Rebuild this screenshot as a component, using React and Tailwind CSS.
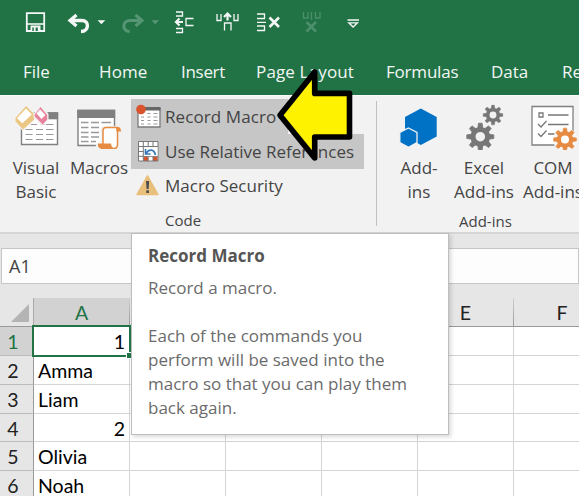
import React from "react";

const tabs = [
  ["File", "w-[76px]"],
  ["Home", "w-[82px] tracking-[0.1px]"],
  ["Insert", "w-[75px] tracking-[-0.3px]"],
  ["Page Layout", "w-[130px] tracking-[0.15px]"],
  ["Formulas", "w-[105px] tracking-[-0.2px]"],
  ["Data", "w-[71px]"],
  ["Re", "w-[17px]"],
];

const rows = [
  { n: 1, a: "1", num: true, h: "h-[29px]" },
  { n: 2, a: "Amma", h: "h-[29px]" },
  { n: 3, a: "Liam", h: "h-[29px]" },
  { n: 4, a: "2", num: true, h: "h-[28px]" },
  { n: 5, a: "Olivia", h: "h-[29px]" },
  { n: 6, a: "Noah", h: "h-[29px]" },
];

function QuickAccess() {
  return (
    <svg className="block h-[48px] w-[579px] shrink-0" viewBox="0 0 579 48" fill="none" stroke="#f4f7f5">
      {/* save */}
      <path d="M26.8 13.2h17.4v17.8H26.8z" strokeWidth="1.8" />
      <path d="M27 24h17" strokeWidth="1.6" />
      <path d="M30.500 25.500h10v6h-10z" fill="#f4f7f5" stroke="none" />
      <path d="M32.300 27.500h1.500v3.500h-1.500zM35.600 27.500h2.200v3.500h-2.200z" fill="#217346" stroke="none" />
      {/* undo */}
      <path d="M70.500 20.500h11.500c7.500 0 7.300 10.800-1 11" strokeWidth="3.400" />
      <path d="M76.500 15l-6.500 5.500 6.500 5.500" strokeWidth="3.300" />
      <path d="M97.500 20.300h7.800l-3.900 4z" fill="#f4f7f5" stroke="none" />
      {/* redo */}
      <g stroke="#569674">
        <path d="M141 20.500h-11c-8 0-8.300 10.800-.3 11" strokeWidth="3" />
        <path d="M135.500 15l6.500 5.500-6.500 5.500" strokeWidth="3" />
      </g>
      <path d="M151.500 20.300h7.500l-3.750 4z" fill="#569674" stroke="none" />
      {/* insert cells right */}
      <g strokeWidth="1.300">
        <path d="M176 12h6.500v4H176M176 28.500h6.500v4H176M193.500 18.500h-7.500v7h7.500" />
        <path d="M176 22h7M179.500 18.500l-3.500 3.500 3.500 3.500" strokeWidth="2.200" />
      </g>
      {/* insert cells down */}
      <g strokeWidth="1.300">
        <path d="M217 14v6.500h4V14M234 14v6.500h4V14M224.500 30.500v-7.500h6.500v7.500" />
        <path d="M227.500 20.500v-6.500M224 17l3.500-3.500 3.500 3.500" strokeWidth="2.200" />
      </g>
      {/* delete rows */}
      <g strokeWidth="1.300">
        <path d="M257 14h7.500v4.500H257M257 22.300h9M257 30.500h7.500v-4.500H257" />
        <path d="M269.500 17.500l9.500 9.500M279 17.500l-9.500 9.500" strokeWidth="2.600" />
      </g>
      {/* delete columns */}
      <g stroke="#4b8f6b" strokeWidth="1.300">
        <path d="M303.500 12v6h4.500V12M311.500 12v8M315.500 12v6h4.500V12" />
        <path d="M306.500 22l9.500 9.500M316 22l-9.500 9.500" strokeWidth="2.600" />
      </g>
      {/* customize */}
      <path d="M347.500 20h11.500" strokeWidth="1.500" />
      <path d="M348.800 22.800h8.600l-4.300 4.200z" strokeWidth="1.300" />
    </svg>
  );
}

function VisualBasicIcon() {
  return (
    <svg className="block h-[42px] w-[46px]" viewBox="14 104 46 42" fill="none">
      <path d="M21.500 113h36v31.500h-36z" fill="#fff" stroke="#808080" strokeWidth="1.400" />
      <path d="M48 112.300h10.200v7H48z" fill="#808080" />
      <path d="M31 124.500h6M40.500 124.500h4M46 124.500h7.500M25.500 129.500h7M36 129.500h7M46 129.500h7.500M25.500 134.500h7M36 134.500h7M46 134.500h7.500M25.500 139.500h7M36 139.500h7M46 139.500h7.500" stroke="#999" strokeWidth="1.200" />
      <path d="M14 119L25.500 104.500 36 114.500v5L23 131l-9-9z" fill="#f2f2f2" />
      <path d="M15.500 118L26 106l8 8v5.500L23 129.500l-7.500-8z" fill="#ecc783" />
      <path d="M17 118.200L26 108.500l5.800 6-9.500 8.800z" fill="#fff" />
      <path d="M33.500 114l7-9.500 8 9.500v6l-6.500 6-8.500-9z" fill="#f2f2f2" />
      <path d="M34.800 114.500l5.700-7.500 6.700 8v4.500l-4.500 5-7.900-8z" fill="#e8819b" />
      <path d="M36.500 113.500l3.500-4.300 5.300 5.800-3.800 4z" fill="#fff" />
    </svg>
  );
}

function MacrosIcon() {
  return (
    <svg className="block h-[42px] w-[46px]" viewBox="76 107 46 42" fill="none">
      <path d="M78 110.500h36.500v35H78z" fill="#fff" stroke="#808080" strokeWidth="1.400" />
      <path d="M77.300 109.800h37.900v8.200H77.300z" fill="#808080" />
      <path d="M81 122.500h7.500M91 122.500h8M101.500 122.500h9.500M81 127.500h7.500M91 127.500h8M81 132.500h7.500M91 132.500h8M81 137h7.500M91 137h8M81 141.500h7.500M91 141.500h5" stroke="#999" strokeWidth="1.300" />
      <path d="M100.500 144v-14q0-4 4-4h15.500q3 1.500 2 6.500h-2v14q-1 4-5 4H99q-4-1-3-7z" fill="#f2f2f2" />
      <path d="M103 144v-13.500q0-3 3-3h11.500v17q0 4-4 4h-12z" fill="#fff" stroke="#e68b42" strokeWidth="1.500" />
      <path d="M98 143.500h13q0 3 2.500 5H101q-3.500-.5-3-5zM116 127h2q3 0 3 4.500h-4.500z" fill="#e68b42" />
    </svg>
  );
}

function RecordIcon() {
  return (
    <svg className="block h-[26px] w-[26px]" viewBox="136 103 26 26" fill="none">
      <path d="M138 107.500h22v18.500h-22z" fill="#fff" stroke="#7b7b7b" strokeWidth="1.300" />
      <path d="M144 106h16.500v3.500H144z" fill="#666" />
      <path d="M147.500 112.500h3M153.500 112.500h4M141 116h3M147.500 116h3M153.500 116h4M141 119.500h3M147.500 119.500h3M153.500 119.500h4M141 123h3M147.500 123h3M153.500 123h4" stroke="#999" strokeWidth="1.200" />
      <circle cx="141" cy="108.500" r="4.800" fill="#d9532c" />
    </svg>
  );
}

function RelativeIcon() {
  return (
    <svg className="block h-[26px] w-[26px]" viewBox="136 138 26 26" fill="none">
      <path d="M138.500 140.500h19.500v19.500h-19.500z" fill="#fff" />
      <path d="M143.500 155.500h4.500v4.500h-4.500zM153 155.500h4.500v4.500H153z" fill="#d9532c" />
      <path d="M138.500 140.500h19.500v19.500h-19.500zM138.500 145.500h19.500M138.500 150.500h5M138.500 155.300h19.500M143.300 140.500v19.500M148.200 140.500v5M153 140.500v5M148.200 155.500v4.500M153 155.500v4.500" stroke="#777" strokeWidth="1" />
      <path d="M144 146h13.500v9H144z" fill="#fff" />
      <path d="M146 152.500c2.500-4.500 8-5 9.500 1.500" stroke="#3478b9" strokeWidth="1.700" />
      <path d="M145.500 148v5h5" stroke="#3478b9" strokeWidth="1.600" />
    </svg>
  );
}

function WarningIcon() {
  return (
    <svg className="block h-[26px] w-[26px]" viewBox="136 173 26 26">
      <path d="M147.500 175.800L158 194.500H137z" fill="#e9bf7c" stroke="#e9bf7c" strokeWidth="1.500" strokeLinejoin="round" />
      <path d="M146 181h3.200l-.6 8h-2zM146.300 190.300h2.600v2.700h-2.600z" fill="#4d4d4d" />
    </svg>
  );
}

function AddinsIcon() {
  return (
    <svg className="block h-[40px] w-[40px]" viewBox="399 107 40 40">
      <path d="M420.800 108.500L436.700 117v19.500L420.800 145 405 136v-19z" fill="#0072c6" />
      <path d="M408.500 128l8.500 4.500v10l-8.500 4.700-8.700-4.700v-10z" fill="#0072c6" stroke="#f2f2f2" strokeWidth="1.300" />
    </svg>
  );
}

function Gear({ cx, cy, s, color, hole }) {
  const teeth = [0, 45, 90, 135, 180, 225, 270, 315];
  return (
    <g transform={`translate(${cx} ${cy}) scale(${s})`}>
      {teeth.map((a) => (
        <path key={a} transform={`rotate(${a})`} d="M-2.600-8L-1.800-13.500H1.800L2.600-8z" fill={color} stroke={color} strokeWidth=".8" />
      ))}
      <circle r="7.300" fill={hole} stroke={color} strokeWidth="5" />
    </g>
  );
}

function ExcelAddinsIcon() {
  return (
    <svg className="block h-[46px] w-[40px]" viewBox="464 104 40 46">
      <Gear cx={480.300} cy={136.700} s={1} color="#777" hole="#f2f2f2" />
      <Gear cx={493} cy={115} s={0.72} color="#777" hole="#f2f2f2" />
    </svg>
  );
}

function ComAddinsIcon() {
  return (
    <svg className="block h-[46px] w-[48px]" viewBox="529 104 48 46" fill="none">
      <path d="M532 106.500h41v38.500h-41z" fill="#fff" stroke="#808080" strokeWidth="1.300" />
      <path d="M539 113h4v4h-4zM548 115h20.500M548 124.500h20.500M548 134h9M538 124l3 3 5.500-6M538 133.500l3 3 5.500-6" stroke="#777" strokeWidth="1.300" />
      <circle cx="565" cy="139.500" r="12" fill="#f7f7f7" />
      <Gear cx={565} cy={139.500} s={0.84} color="#e68b42" hole="#fff" />
    </svg>
  );
}

function BigButton({ icon, lines, width, iconPad }) {
  return (
    <div className={`flex shrink-0 flex-col items-center ${width}`}>
      <div className={`flex h-[60px] ${iconPad}`}>{icon}</div>
      {lines.map((l) => (
        <span key={l} className="h-6 whitespace-nowrap text-[17px] leading-6">{l}</span>
      ))}
    </div>
  );
}

function ColumnHead({ letter, active, width }) {
  return (
    <div className={`flex shrink-0 ${width} ${active ? "bg-[#d2d2d2]" : ""}`}>
      <span className={`flex-1 pt-px text-center font-[Lato,sans-serif] text-[19.5px] leading-[28px] ${active ? "text-[#217346]" : "text-[#222]"}`}>{letter}</span>
      <span className="w-px bg-linear-to-b from-[#d0d0d0] to-[#999]" />
    </div>
  );
}

export default function App() {
  return (
    <div className="relative flex h-[496px] w-[579px] flex-col overflow-hidden bg-[#e6e6e6] font-['Open_Sans',sans-serif] text-[#444]">
      <header className="flex h-[95px] shrink-0 flex-col bg-[#217346]">
        <QuickAccess />
        <nav className="flex pl-[23px] pt-3 text-[17px] leading-6 text-[#f3f7f4]">
          {tabs.map(([t, w]) => (
            <span key={t} className={`shrink-0 whitespace-nowrap ${w}`}>{t}</span>
          ))}
        </nav>
      </header>

      <section className="flex h-[137px] shrink-0 border-t border-[#fafafa] bg-[#f2f2f2]">
        <div className="flex w-[131px] shrink-0 pl-1">
          <BigButton width="w-[64px]" icon={<VisualBasicIcon />} lines={["Visual", "Basic"]} iconPad="pt-2 pl-[2px]" />
          <BigButton width="w-[62px]" icon={<MacrosIcon />} lines={["Macros"]} iconPad="pt-[11px]" />
        </div>
        <div className="flex w-[245px] shrink-0 flex-col pt-[3px] text-[17px]">
          <div className="flex h-[35px] w-[157px] items-center bg-[#c6c6c6] pl-[5px]">
            <RecordIcon />
            <span className="whitespace-nowrap pl-[3px] tracking-[0.1px]">Record Macro</span>
          </div>
          <div className="flex h-[35px] w-[233px] items-center bg-[#c6c6c6] pl-[5px]">
            <RelativeIcon />
            <span className="whitespace-nowrap pl-[3px]">Use Relative References</span>
          </div>
          <div className="flex h-[34px] items-center pl-[5px]">
            <WarningIcon />
            <span className="whitespace-nowrap pl-[3px]">Macro Security</span>
          </div>
          <span className="pl-[34px] pt-[7px] text-[15px] leading-5">Code</span>
        </div>
        <div className="mt-[5px] h-[125px] w-px shrink-0 bg-[#c0c0c0]" />
        <div className="flex w-[220px] shrink-0 flex-col">
          <div className="flex h-[115px] pl-[9px]">
            <BigButton width="w-[66px]" icon={<AddinsIcon />} lines={["Add-", "ins"]} iconPad="pt-[11px]" />
            <BigButton width="w-[64px]" icon={<ExcelAddinsIcon />} lines={["Excel", "Add-ins"]} iconPad="pt-2" />
            <BigButton width="w-[74px]" icon={<ComAddinsIcon />} lines={["COM", "Add-ins"]} iconPad="pt-2" />
          </div>
          <span className="pl-[82px] text-[15px] leading-5">Add-ins</span>
        </div>
      </section>

      <div className="flex h-[66px] shrink-0 flex-col border-t-2 border-[#d5d5d5] pl-px pt-[14px]">
        <div className="flex h-[36px] shrink-0 items-center border border-[#c6c6c6] bg-[#fdfdfd] pl-[7px] text-[18px]">A1</div>
      </div>

      <div className="flex h-[29px] shrink-0 border-b border-[#999]">
        <div className="flex w-[33px] shrink-0 items-end justify-end pb-1 pr-1">
          <svg className="h-[18px] w-[18px]" viewBox="0 0 18 18"><path d="M18 0v18H0z" fill="#b4b4b4" /></svg>
        </div>
        <span className="w-px shrink-0 bg-[#aaa]" />
        <ColumnHead letter="A" active width="w-[96px]" />
        <ColumnHead letter="B" width="w-[96px]" />
        <ColumnHead letter="C" width="w-[96px]" />
        <ColumnHead letter="D" width="w-[96px]" />
        <ColumnHead letter="E" width="w-[96px]" />
        <ColumnHead letter="F" width="w-[97px]" />
      </div>

      <div className="flex flex-1 flex-col font-[Lato,sans-serif] text-[19.5px] text-black">
        {rows.map((r) => (
          <div key={r.n} className={`flex shrink-0 ${r.h}`}>
            <div className={`flex w-[34px] shrink-0 items-center justify-center border-b border-r border-b-[#bbb] border-r-[#999] pr-[7px] pt-[2px] ${r.n === 1 ? "bg-[#d2d2d2] text-[#217346]" : "bg-[#e6e6e6] text-[#222]"}`}>{r.n}</div>
            <div className={`flex w-[96px] shrink-0 items-center border-b border-r border-[#d4d4d4] bg-white pl-1 pr-1 pt-[2px] ${r.num ? "justify-end" : ""}`}>{r.a}</div>
            {[0, 1, 2, 3, 4].map((c) => (
              <div key={c} className="w-[96px] shrink-0 border-b border-r border-[#d4d4d4] bg-white" />
            ))}
          </div>
        ))}
      </div>

      {/* active cell frame with fill handle */}
      <div className="absolute left-[32px] top-[325px] h-[32px] w-[99px] border-2 border-[#217346]" />
      <div className="absolute left-[126px] top-[352px] h-[7px] w-[7px] border border-white bg-[#217346]" />

      {/* tooltip */}
      <div className="absolute left-[131px] top-[233px] flex h-[202px] w-[318px] flex-col border border-[#bebebe] bg-white pl-[16px] pt-[10px] text-[17px] leading-6 text-[#6b6b6b] shadow-[2px_2px_4px_rgba(0,0,0,0.15)]">
        <strong className="font-bold leading-6 text-[#555]">Record Macro</strong>
        <p className="mt-2">Record a macro.</p>
        <p className="mt-6 whitespace-nowrap">
          Each of the commands you<br />perform will be saved into the<br />macro so that you can play them<br />back again.
        </p>
      </div>

      {/* callout arrow */}
      <svg className="absolute left-[270px] top-[62px] h-[104px] w-[90px]" viewBox="270 62 90 104">
        <path d="M280 115.300L314.700 72V93.400H349.500V137H314.700V158z" fill="#fff200" stroke="#000" strokeWidth="5.600" strokeLinejoin="round" />
      </svg>
    </div>
  );
}
